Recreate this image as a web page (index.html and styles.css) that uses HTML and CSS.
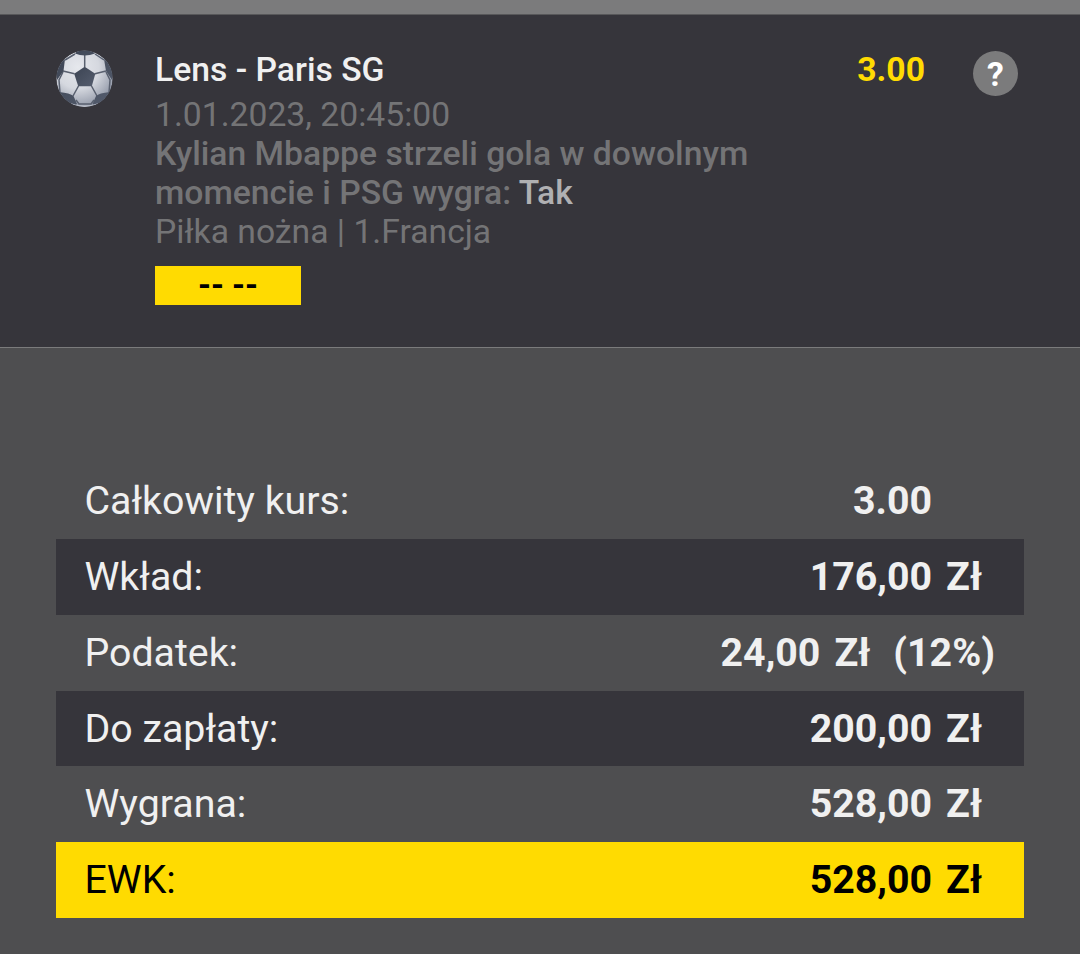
FILE: index.html
```html
<!doctype html>
<html lang="pl">
<head>
  <meta charset="UTF-8">
  <title>Kupon</title>
  <link rel="stylesheet" href="styles.css">
</head>
<body>
  <div class="topbar"></div>
  <div class="event">
    <svg class="ball" viewBox="0 0 58 58">
      <defs>
        <radialGradient id="shade" cx="0.38" cy="0.3" r="0.75">
          <stop offset="0" stop-color="#e6e8ed"/>
          <stop offset="0.5" stop-color="#d5d8df"/>
          <stop offset="1" stop-color="#8c93a3"/>
        </radialGradient>
        <linearGradient id="dark" x1="0" y1="0" x2="1" y2="1">
          <stop offset="0" stop-color="#3c4453"/>
          <stop offset="1" stop-color="#555d6e"/>
        </linearGradient>
        <clipPath id="round"><circle cx="29.500" cy="28.700" r="28.200"/></clipPath>
      </defs>
      <g clip-path="url(#round)">
        <circle cx="29.500" cy="28.700" r="28.200" fill="url(#shade)"/>
        <path d="M29.700 17V5M19.500 23.700L8 21M40 23.700L51 21M23.500 36L18 46M36.500 36L42 46M20 4L10 10M40 4L49 10M21 50L24 54H36L39 50M8 22L4 30L5 43M51 22L55 30L54 43" fill="none" stroke="#59606f" stroke-width="1.500"/>
        <path d="M29.700 16.700L40.300 23.700L36.800 36.300H23.200L19.200 23.700Z" fill="url(#dark)"/>
        <path d="M20 3.500Q29.700 7.500 40 3.500L36 0H23ZM10 9L8.500 21L2 30L0 16ZM49 9L51 21L57 30L59 16ZM4 42Q15 43 18.500 46L22 54L18 57L8 52ZM55 42Q44 43 41 46L37.500 54L41 57L51 52Z" fill="url(#dark)"/>
        <path d="M15 53Q29.500 58 44 53L38 58H21Z" fill="#b9bec9"/>
      </g>
    </svg>
    <div class="info">
      <div class="teams">Lens - Paris SG</div>
      <div class="date">1.01.2023, 20:45:00</div>
      <div class="market">Kylian Mbappe strzeli gola w dowolnym</div>
      <div class="market">momencie i PSG wygra: <span class="pick">Tak</span></div>
      <div class="league">Piłka nożna | 1.Francja</div>
      <div class="score">-- --</div>
    </div>
    <div class="odds">3.00</div>
    <div class="help">?</div>
  </div>
  <div class="summary">
    <div class="row"><span>Całkowity kurs:</span><span class="value total">3.00</span></div>
    <div class="row dark"><span>Wkład:</span><span class="value">176,00<span class="unit">Zł</span></span></div>
    <div class="row"><span>Podatek:</span><span class="value tax">24,00<span class="unit">Zł</span><span class="percent">(12%)</span></span></div>
    <div class="row dark"><span>Do zapłaty:</span><span class="value">200,00<span class="unit">Zł</span></span></div>
    <div class="row"><span>Wygrana:</span><span class="value">528,00<span class="unit">Zł</span></span></div>
    <div class="row win"><span>EWK:</span><span class="value">528,00<span class="unit">Zł</span></span></div>
  </div>
</body>
</html>
```
FILE: styles.css
```css
* {
  box-sizing: border-box;
}

body {
  margin: 0;
  height: 954px;
  overflow: hidden;
  background-color: #4e4e50;
  color: #f0f0f0;
  font-family: Roboto, sans-serif;
}

.topbar {
  height: 15px;
  background-color: #7b7b7c;
  border-bottom: 1px solid #58585a;
}

.event {
  display: flex;
  align-items: flex-start;
  height: 333px;
  padding: 35px 62px 0 55px;
  background-color: #36353b;
  border-bottom: 1px solid #7b7b7c;
  font-size: 33.700px;
  line-height: 39px;
}

.ball {
  width: 58px;
  height: 58px;
}

.info {
  width: 640px;
  margin-left: 42px;
  color: #747476;
}

.teams {
  margin-bottom: 6px;
  color: #f0f0f0;
  font-weight: 500;
}

.market {
  font-weight: 500;
}

.pick {
  color: #b0b0b2;
}

.score {
  width: 146px;
  height: 39px;
  margin-top: 15px;
  background-color: #ffdb01;
  color: #000;
  font-size: 33px;
  font-weight: 700;
  line-height: 38px;
  text-align: center;
}

.odds {
  width: 130px;
  color: #ffdb01;
  font-weight: 700;
  text-align: right;
}

.help {
  width: 45px;
  height: 45px;
  margin: 1px 0 0 auto;
  border-radius: 50%;
  background-color: #7b7b7c;
  color: #fff;
  font-weight: 700;
  line-height: 47px;
  text-align: center;
}

.summary {
  padding: 115.500px 56.500px 0 56px;
  font-size: 39.300px;
}

.row {
  display: flex;
  justify-content: space-between;
  height: 75.700px;
  padding: 0 41.500px 0 28.500px;
  line-height: 77px;
}

.row:first-child {
  line-height: 74px;
}

.dark {
  background-color: #36353b;
}

.win {
  background-color: #ffdb01;
  color: #000;
}

.value {
  font-weight: 700;
}

.total {
  margin-right: 50px;
}

.tax {
  margin-right: -13px;
}

.unit {
  margin-left: 14px;
}

.percent {
  margin-left: 23px;
}
```
